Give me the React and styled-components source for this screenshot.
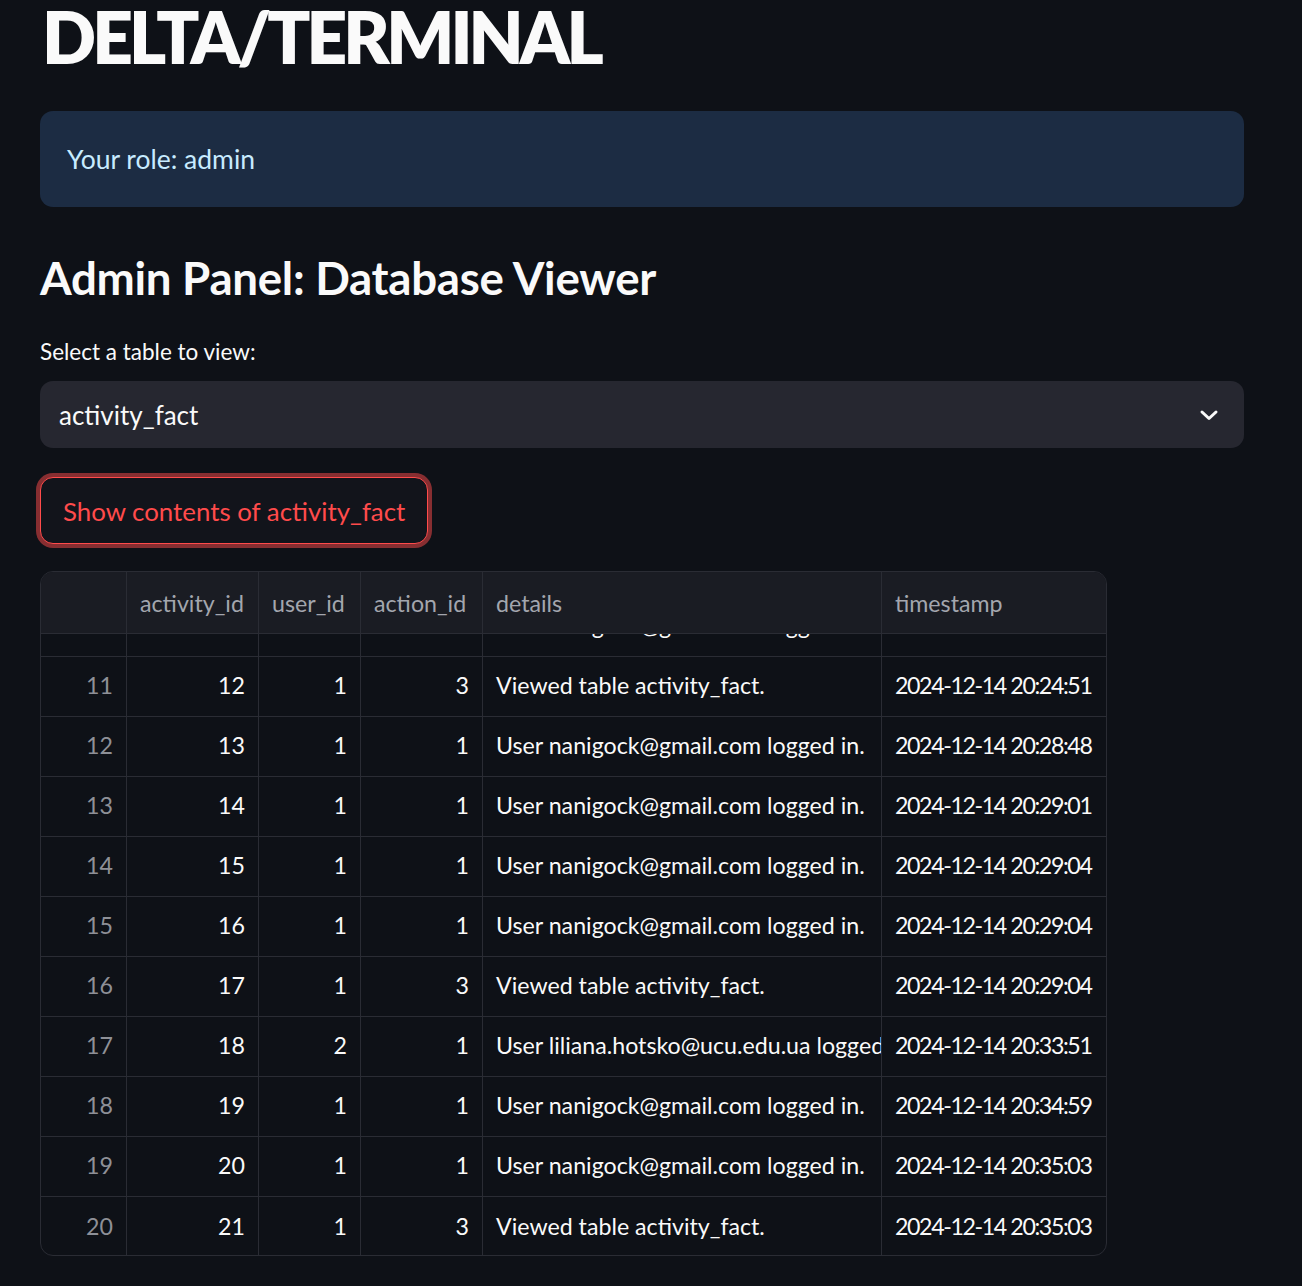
import React, { useLayoutEffect, useRef } from "react";
import styled, { createGlobalStyle } from "styled-components";

const Global = createGlobalStyle`
  html, body { margin: 0; padding: 0; background: #0e1117; }
  body { font-family: Lato, "Noto Sans", sans-serif; color: #fafafa; }
  * { box-sizing: border-box; }
`;

const Main = styled.main`
  width: 1302px;
  min-height: 1286px;
  padding: 0 58px 0 40px;
  display: flex;
  flex-direction: column;
  align-items: flex-start;
`;

const Title = styled.h1`
  margin: 0;
  font-family: Lato, sans-serif;
  font-weight: 800;
  font-size: 71px;
  line-height: 74px;
  letter-spacing: -3.9px;
  color: #fafafa;
  padding-left: 2px;
`;

const Info = styled.div`
  margin-top: 37px;
  width: 1204px;
  height: 96px;
  border-radius: 13px;
  background: #1c2c43;
  color: #c7ebff;
  display: flex;
  align-items: center;
  padding: 0 27px;
  font-size: 26.5px;
`;

const Subheader = styled.h3`
  margin: 44px 0 0;
  font-weight: 700;
  font-size: 45.7px;
  line-height: 54px;
  letter-spacing: -0.3px;
  color: #fafafa;
`;

const Label = styled.label`
  margin-top: 32px;
  font-size: 22.5px;
  line-height: 30px;
  color: #fafafa;
`;

const Select = styled.div`
  margin-top: 14px;
  width: 1204px;
  height: 67px;
  border-radius: 13px;
  background: #262730;
  display: flex;
  align-items: center;
  justify-content: space-between;
  padding: 0 25px 0 19px;
  font-size: 26px;
  color: #fafafa;
`;

const Chevron = styled.svg`
  width: 20px;
  height: 20px;
  display: block;
`;

const Button = styled.button`
  margin-top: 29px;
  height: 67px;
  padding: 0 22px;
  border-radius: 13px;
  border: 1.5px solid #ff4b4b;
  box-shadow: 0 0 0 4px rgba(255, 75, 75, 0.5);
  background: #12141b;
  color: #ff4b4b;
  font-family: Lato, sans-serif;
  font-size: 25.85px;
  cursor: pointer;
`;

const TableWrap = styled.div`
  margin-top: 27px;
  width: 1067px;
  border: 1px solid #2a2c34;
  border-radius: 13px;
  overflow: hidden;
  background: #0e1117;
  font-size: 23.2px;
`;

const cols = "86px 132px 102px 122px 399px 1fr";

const HeadRow = styled.div`
  display: grid;
  grid-template-columns: ${cols};
  height: 62px;
  background: #1a1c23;
  border-bottom: 1px solid #2a2c34;
`;

const HeadCell = styled.div`
  display: flex;
  align-items: center;
  padding: 0 13px;
  color: #a3a6ae;
  border-right: ${(p) => (p.$last ? "none" : "1px solid #2a2c34")};
  white-space: nowrap;
  overflow: hidden;
`;

const Body = styled.div`
  height: 621px;
  overflow: hidden;
`;

const Row = styled.div`
  display: grid;
  grid-template-columns: ${cols};
  height: 60px;
  border-bottom: ${(p) => (p.$last ? "none" : "1px solid #2a2c34")};
`;

const Cell = styled.div`
  display: flex;
  align-items: center;
  justify-content: ${(p) => (p.$num ? "flex-end" : "flex-start")};
  padding: 0 13px 3px;
  color: ${(p) => (p.$index ? "#8e9097" : "#fafafa")};
  border-right: ${(p) => (p.$last ? "none" : "1px solid #2a2c34")};
  letter-spacing: ${(p) => (p.$tight ? "-1.4px" : "normal")};
  white-space: nowrap;
  overflow: hidden;
`;

const rows = [
  [10, 11, 1, 1, "User nanigock@gmail.com logged in.", "2024-12-14 20:24:38"],
  [11, 12, 1, 3, "Viewed table activity_fact.", "2024-12-14 20:24:51"],
  [12, 13, 1, 1, "User nanigock@gmail.com logged in.", "2024-12-14 20:28:48"],
  [13, 14, 1, 1, "User nanigock@gmail.com logged in.", "2024-12-14 20:29:01"],
  [14, 15, 1, 1, "User nanigock@gmail.com logged in.", "2024-12-14 20:29:04"],
  [15, 16, 1, 1, "User nanigock@gmail.com logged in.", "2024-12-14 20:29:04"],
  [16, 17, 1, 3, "Viewed table activity_fact.", "2024-12-14 20:29:04"],
  [17, 18, 2, 1, "User liliana.hotsko@ucu.edu.ua logged in.", "2024-12-14 20:33:51"],
  [18, 19, 1, 1, "User nanigock@gmail.com logged in.", "2024-12-14 20:34:59"],
  [19, 20, 1, 1, "User nanigock@gmail.com logged in.", "2024-12-14 20:35:03"],
  [20, 21, 1, 3, "Viewed table activity_fact.", "2024-12-14 20:35:03"],
];

const headers = ["", "activity_id", "user_id", "action_id", "details", "timestamp"];

export default function App() {
  const bodyRef = useRef(null);
  useLayoutEffect(() => {
    if (bodyRef.current) bodyRef.current.scrollTop = 37;
  }, []);
  return (
    <>
      <Global />
      <Main>
        <Title>DELTA/TERMINAL</Title>
        <Info>Your role: admin</Info>
        <Subheader>Admin Panel: Database Viewer</Subheader>
        <Label>Select a table to view:</Label>
        <Select>
          <span>activity_fact</span>
          <Chevron viewBox="0 0 20 20" fill="none">
            <path d="M3 7l7 6.5L17 7" stroke="#fafafa" strokeWidth="3" strokeLinecap="round" strokeLinejoin="round" />
          </Chevron>
        </Select>
        <Button>Show contents of activity_fact</Button>
        <TableWrap>
          <HeadRow>
            {headers.map((h, i) => (
              <HeadCell key={i} $last={i === headers.length - 1}>{h}</HeadCell>
            ))}
          </HeadRow>
          <Body ref={bodyRef}>
            {rows.map((r, ri) => (
              <Row key={ri} $last={ri === rows.length - 1}>
                {r.map((v, ci) => (
                  <Cell
                    key={ci}
                    $num={ci < 4}
                    $index={ci === 0}
                    $tight={ci === 5}
                    $last={ci === r.length - 1}
                  >
                    {v}
                  </Cell>
                ))}
              </Row>
            ))}
          </Body>
        </TableWrap>
      </Main>
    </>
  );
}
